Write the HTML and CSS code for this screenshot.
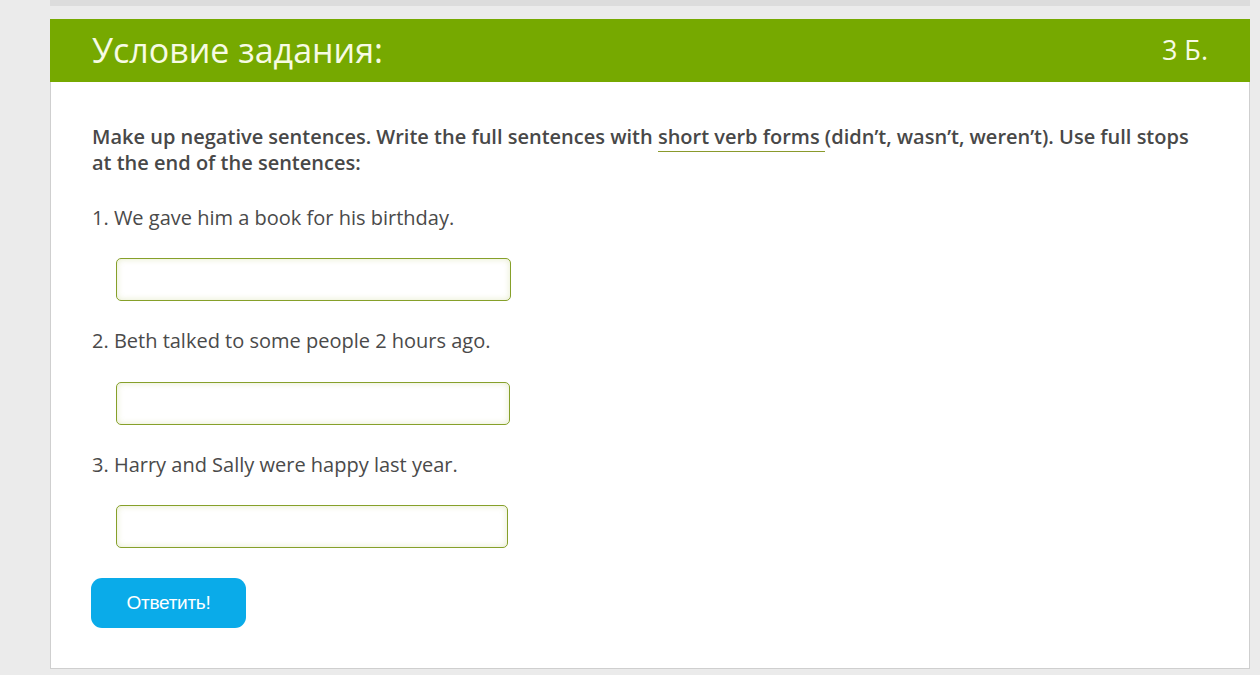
FILE: index.html
```html
<!DOCTYPE html>
<html lang="ru">
<head>
<meta charset="utf-8">
<title>Условие задания</title>
<link rel="stylesheet" href="styles.css">
</head>
<body>
<div class="page">
  <div class="topstrip"></div>
  <section class="task">
    <header class="task-head">
      <h1 class="task-title">Условие задания:</h1>
      <span class="task-score">3 Б.</span>
    </header>
    <div class="task-body">
      <p class="instr">Make up negative sentences. Write the full sentences with <span class="term">short verb forms </span>(didn’t, wasn’t, weren’t). Use full stops at the end of the sentences:</p>
      <div class="item">
        <p class="q">1. We gave him a book for his birthday.</p>
        <input class="answer w1" type="text">
      </div>
      <div class="item">
        <p class="q">2. Beth talked to some people 2 hours ago.</p>
        <input class="answer w2" type="text">
      </div>
      <div class="item">
        <p class="q">3. Harry and Sally were happy last year.</p>
        <input class="answer w3" type="text">
      </div>
      <button class="submit" type="button">Ответить!</button>
    </div>
  </section>
</div>
</body>
</html>
```

FILE: styles.css
```css
html, body {
  margin: 0;
  padding: 0;
  background: #ebebeb;
}
body {
  font-family: "Open Sans", "Liberation Sans", sans-serif;
  color: #444;
}
.page {
  margin-left: 50px;
  width: 1200px;
}
.topstrip {
  height: 6px;
  background: #dcdcdc;
  margin-bottom: 13px;
}
.task {
  background: #fff;
  border: 1px solid #cfcfcf;
  border-top: none;
  width: 1198px;
}
.task-head {
  height: 63px;
  background: #76a900;
  display: flex;
  align-items: center;
  justify-content: space-between;
  padding: 0 42px 0 42px;
  margin: 0 -1px;
  color: #f7fbe4;
}
.task-title {
  margin: 0;
  font-size: 34px;
  font-weight: 400;
  line-height: 1;
  padding-bottom: 2px;
}
.task-score {
  font-size: 27px;
  line-height: 1;
  padding-bottom: 2px;
}
.task-body {
  padding: 42px 40px 40px 41px;
  display: flex;
  flex-direction: column;
  align-items: flex-start;
}
.instr {
  margin: 0;
  font-size: 20px;
  line-height: 26px;
  font-weight: 600;
  color: #484848;
}
.term {
  border-bottom: 1px solid #8a9a2c;
  padding-bottom: 1px;
}
.item {
  margin-top: 27px;
  display: flex;
  flex-direction: column;
  align-items: flex-start;
}
.item:first-of-type {
  margin-top: 29px;
}
.q {
  margin: 0;
  font-size: 20px;
  line-height: 26px;
  color: #4a4a4a;
}
.answer {
  margin: 27px 0 0 24px;
  height: 43px;
  box-sizing: border-box;
  border: 1px solid #86a02a;
  border-radius: 5px;
  background: #fff;
  box-shadow: inset 0 0 6px rgba(180, 195, 100, 0.35);
  padding: 0 10px;
  font: inherit;
}
.item:nth-of-type(2) .answer {
  margin-top: 28px;
}
.w1 { width: 395px; }
.w2 { width: 394px; }
.w3 { width: 392px; }
.submit {
  margin: 30px 0 0 -1px;
  width: 155px;
  height: 50px;
  border: none;
  border-radius: 11px;
  background: #0aabe9;
  color: #fff;
  font-family: "Liberation Sans", Arial, sans-serif;
  font-size: 19px;
  letter-spacing: -0.3px;
  cursor: pointer;
}
```
